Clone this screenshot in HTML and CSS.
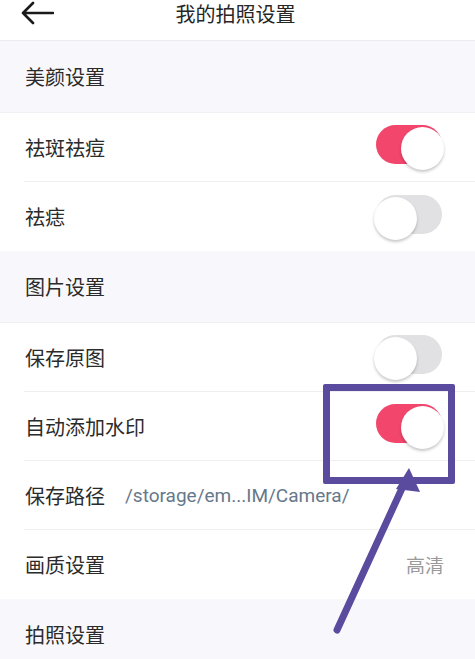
FILE: index.html
```html
<!DOCTYPE html>
<html lang="zh">
<head>
<meta charset="utf-8">
<link rel="stylesheet" href="styles.css">
</head>
<body>
<div class="page">
  <header class="topbar">
    <svg class="back" width="34" height="26" viewBox="0 0 34 26">
      <path d="M3 13 H33 M3 13 L13 3 M3 13 L13 23" fill="none" stroke="#1a1a1a" stroke-width="2.6" stroke-linecap="round" stroke-linejoin="round"/>
    </svg>
    <div class="title">我的拍照设置</div>
  </header>

  <div class="section">美颜设置</div>
  <div class="group">
    <div class="row"><span class="label">祛斑祛痘</span><span class="toggle on"><span class="knob"></span></span></div>
    <div class="row"><span class="label">祛痣</span><span class="toggle"><span class="knob"></span></span></div>
  </div>

  <div class="section">图片设置</div>
  <div class="group">
    <div class="row"><span class="label">保存原图</span><span class="toggle"><span class="knob"></span></span></div>
    <div class="row"><span class="label">自动添加水印</span><span class="toggle on"><span class="knob"></span></span></div>
    <div class="row"><span class="label">保存路径</span><span class="path">/storage/em...IM/Camera/</span></div>
    <div class="row"><span class="label">画质设置</span><span class="value">高清</span></div>
  </div>

  <div class="section">拍照设置</div>

  <div class="mark-box"></div>
  <svg class="mark-arrow" width="475" height="659" viewBox="0 0 475 659">
    <line x1="337" y1="630" x2="404" y2="484" stroke="#5a4b9e" stroke-width="7" stroke-linecap="round"/>
    <polygon points="409,468 396,489 420,492" fill="#5a4b9e"/>
  </svg>
</div>
</body>
</html>
```

FILE: styles.css
```css
html, body {
  margin: 0;
  padding: 0;
  background: #ffffff;
}
.page {
  position: relative;
  width: 475px;
  height: 659px;
  overflow: hidden;
  font-family: "Noto Sans CJK SC", "Noto Sans", sans-serif;
  color: #2b2b2b;
}
.topbar {
  height: 41px;
  position: relative;
  display: flex;
  justify-content: center;
  border-bottom: 1px solid #ececf0;
  box-sizing: border-box;
}
.back {
  position: absolute;
  left: 20px;
  top: 0px;
}
.title {
  font-size: 20px;
  line-height: 28px;
  color: #262626;
  margin-left: -4px;
}
.section {
  height: 72px;
  background: #f8f8fc;
  display: flex;
  align-items: center;
  padding-left: 25px;
  font-size: 20px;
  color: #2b2b2b;
  box-sizing: border-box;
  border-bottom: 1px solid #f0f0f4;
}
.group {
  background: #fff;
}
.row {
  height: 69px;
  display: flex;
  align-items: center;
  justify-content: space-between;
  margin-left: 24px;
  padding-left: 1px;
  padding-right: 31px;
  box-sizing: border-box;
  border-bottom: 1px solid #efeff2;
  font-size: 20px;
}
.row:last-child {
  border-bottom: none;
}
.label {
  color: #2b2b2b;
}
.path {
  flex: 1;
  margin-left: 20px;
  font-family: "Roboto", "Noto Sans", sans-serif;
  font-size: 19px;
  color: #66788a;
}
.value {
  color: #9a9a9a;
  font-size: 19px;
}
.toggle {
  position: relative;
  width: 70px;
  height: 46px;
  flex: none;
}
.toggle::before {
  content: "";
  position: absolute;
  left: 2px;
  top: 1px;
  width: 66px;
  height: 39px;
  border-radius: 20px;
  background: #e1e1e4;
}
.toggle.on::before {
  background: #f2466c;
}
.knob {
  position: absolute;
  top: 3px;
  left: 0;
  width: 43px;
  height: 43px;
  border-radius: 50%;
  background: #fff;
  box-shadow: 0 2px 3px rgba(0,0,0,0.22);
}
.toggle.on .knob {
  left: auto;
  right: 0;
}
.mark-box {
  position: absolute;
  left: 323px;
  top: 384px;
  width: 132px;
  height: 100px;
  box-sizing: border-box;
  border: 7px solid #5a4b9e;
  border-radius: 2px;
}
.mark-arrow {
  position: absolute;
  left: 0;
  top: 0;
}
```
